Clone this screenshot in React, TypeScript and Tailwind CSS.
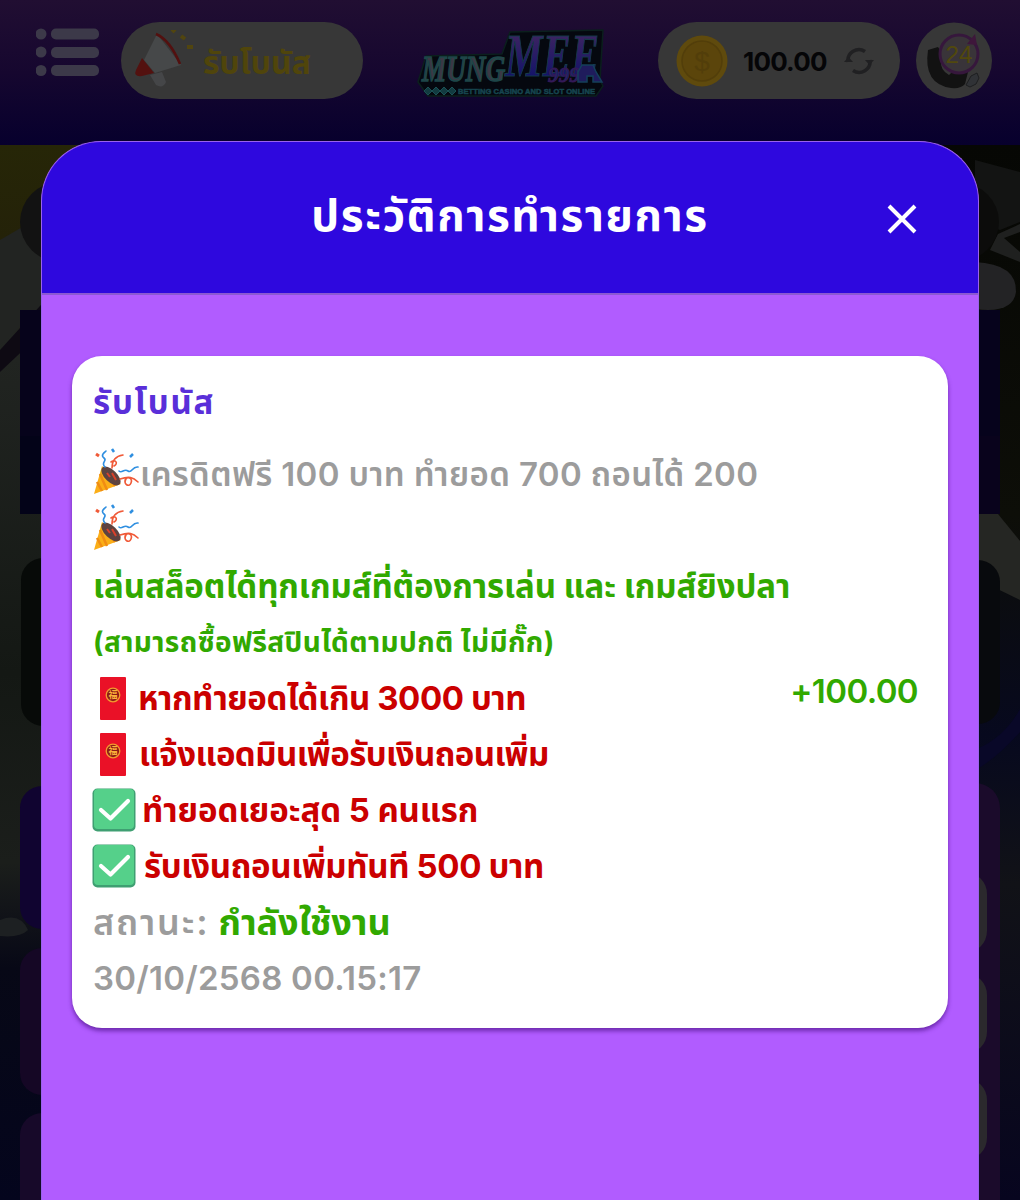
import React from 'react';

const font = "font-['Inter','Noto_Sans_Thai','Noto_Sans','Open_Sans',sans-serif]";

function PartyPopper() {
  return (
    <svg viewBox="0 0 48 48" className="-mt-1 h-12 w-12 shrink-0" fill="none">
      <path d="M9 18 L1 46 L28 36 Z" fill="#fbae17" />
      <path d="M7 26 L14 42 M4 34 L9 43 M12 21 L22 38" stroke="#f08c13" strokeWidth="2.500" />
      <ellipse cx="18" cy="28" rx="6" ry="12" transform="rotate(-46 18 28)" fill="#5d4340" />
      <path d="M14 25 l3 4 M19 25 l4 7" stroke="#d9412b" strokeWidth="2" />
      <path d="M12 19 c-5 -5 3 -6 -1 -9 s1 -6 2 -7 M26 23 c3 3 5 -3 9 0 s4 -5 10 -4" stroke="#2f8fe0" strokeWidth="1.600" strokeLinecap="round" />
      <path d="M19 20 c0 -8 4 -12 11 -13 M18 14 c4 -3 8 1 3 4 M27 31 c9 -3 13 -2 18 3 M33 31 c-3 5 3 9 5 4 s-4 -7 -6 -3" stroke="#f05a38" strokeWidth="1.600" strokeLinecap="round" />
      <path d="M19 1 l2 3 M37 9 l3 -3" stroke="#2f8fe0" strokeWidth="2.500" />
      <path d="M3 6 l3 2" stroke="#f05a38" strokeWidth="3" />
    </svg>
  );
}

function RedEnvelope() {
  return (
    <svg viewBox="0 0 26 43" className="h-[43px] w-[26px] shrink-0">
      <rect width="26" height="43" rx="1" fill="#ea1127" />
      <circle cx="13" cy="18" r="6.8" fill="#8e1b16" stroke="#f29a2e" strokeWidth="1.3" />
      <text x="13" y="21.4" textAnchor="middle" fontSize="9" fontWeight="700" fill="#fbb03b" fontFamily="Noto Sans CJK TC, sans-serif">福</text>
    </svg>
  );
}

function CheckBadge() {
  return (
    <svg viewBox="0 0 44 44" className="-ml-px h-11 w-11 shrink-0" fill="none">
      <rect x="0.5" y="0.5" width="43" height="43" rx="5" fill="#3f9f72" />
      <rect x="2" y="1" width="40" height="40" rx="4" fill="#55d08a" />
      <path d="M9 22 L18.5 30.5 L36 13" stroke="#fff" strokeWidth="4.2" strokeLinecap="round" strokeLinejoin="round" />
    </svg>
  );
}

function Logo() {
  return (
    <svg viewBox="0 0 200 80" className="h-20 w-[200px] overflow-visible" fontWeight="700" fontStyle="italic">
      <path d="M16 34 L92 32 L100 10 L193 8 L190 58 L193 64 L186 74 L18 74 L8 60 Z" fill="#05080f" stroke="#0b1f1d" strokeWidth="1.500" strokeLinejoin="round" />
      <defs>
        <linearGradient id="mee" x1="0" y1="0" x2="0" y2="1">
          <stop offset="0.150" stopColor="#3f2560" />
          <stop offset="0.800" stopColor="#151469" />
        </linearGradient>
      </defs>
      <g fontFamily="Liberation Serif, serif">
        <text x="95" y="54" fontSize="62" textLength="94" lengthAdjust="spacingAndGlyphs" fill="url(#mee)" stroke="#163a4a" strokeWidth="1.200">MEE</text>
        <text x="12" y="59" fontSize="36" textLength="83" lengthAdjust="spacingAndGlyphs" fill="#3b3844" stroke="#1d4648" strokeWidth="1.600">MUNG</text>
        <text x="138" y="60" fontSize="21" textLength="32" lengthAdjust="spacingAndGlyphs" fill="#182764" stroke="#351856" strokeWidth="1">999</text>
      </g>
      <path d="M168 60 v-10 l4 -7 h11 l3 7 l6 10 h-9 v-6 h-6 v6 Z" fill="#1f1c5c" stroke="#143f5a" strokeWidth="1.500" />
      <g fill="#123b40" stroke="#1a5054">
        <path d="M18 65 l4 4 -4 4 -4 -4 Z M26 65 l4 4 -4 4 -4 -4 Z M34 65 l4 4 -4 4 -4 -4 Z M42 65 l4 4 -4 4 -4 -4 Z" />
      </g>
      <text x="48" y="72" fontSize="8" fontStyle="normal" fontFamily="Liberation Sans, sans-serif" textLength="137" lengthAdjust="spacingAndGlyphs" fill="#16454f" stroke="#16454f" strokeWidth="0.5">BETTING CASINO AND SLOT ONLINE</text>
    </svg>
  );
}

function Header() {
  return (
    <header className="flex h-[145px] items-start bg-linear-to-b from-[#210e32] via-[#16072f] to-[#07002d] pt-[22px] pl-9">
      <svg viewBox="0 0 66 60" className="h-[60px] w-[66px]" fill="#3c3949">
        <circle cx="5" cy="12" r="5.500" />
        <circle cx="5" cy="30" r="5.500" />
        <circle cx="5" cy="48.500" r="5.500" />
        <rect x="15" y="6.500" width="48" height="11" rx="5" />
        <rect x="15" y="25" width="48" height="11" rx="5" />
        <rect x="15" y="43" width="48" height="11" rx="5" />
      </svg>
      <div className="ml-[19px] flex h-[77px] w-[242px] items-center rounded-full bg-[#373737] pl-3">
        <svg viewBox="0 0 62 62" className="h-[62px] w-[62px]" fill="none">
          <path d="M24 4 L48 35 L22 43 L11 30 Z" fill="#464849" />
          <path d="M9 28 L21 43 L9 46 Q0 47 3 40 Z" fill="#53110f" />
          <path d="M17 45 l12 -3 l4 10 q-3 7 -10 3 Z" fill="#454648" />
          <path d="M23 4 Q37 10 47 34" stroke="#53100f" strokeWidth="2.500" />
          <path d="M39 -1 l3 3 M48 6 l4 3 M54 17 l6 0" stroke="#51450f" strokeWidth="4" />
        </svg>
        <span className="mt-1 ml-2 text-[32px] font-bold text-[#50450b]">รับโบนัส</span>
      </div>
      <div className="ml-[47px]">
        <Logo />
      </div>
      <div className="ml-12 flex h-[77px] w-[242px] items-center rounded-full bg-[#373737] pl-[18px]">
        <svg viewBox="0 0 52 52" className="h-[52px] w-[52px]">
          <circle cx="26" cy="26" r="25.500" fill="#5f4a0d" />
          <circle cx="26" cy="26" r="20" fill="#5b450b" stroke="#523e0a" strokeWidth="1.500" />
          <text x="26" y="36" textAnchor="middle" fontSize="28" fill="#523e0a" fontFamily="Liberation Sans, sans-serif">$</text>
        </svg>
        <span className="mt-0.5 ml-[15px] w-[86px] text-[26px] font-bold tracking-[-0.8px] text-[#050507]">100.00</span>
        <svg viewBox="0 0 30 28" className="ml-[15px] h-7 w-[30px]" fill="none" stroke="#202022" strokeWidth="3.500">
          <path d="M4 15 A11 11 0 0 1 21 4.500 M26 13 A11 11 0 0 1 9 23.500" />
          <path d="M0 15 h9 l-4.500 -5 Z M21 13 h9 l-4.500 5 Z" fill="#202022" stroke="none" />
        </svg>
      </div>
      <svg viewBox="0 0 76 77" className="ml-4 h-[77px] w-[76px]" fill="none">
        <circle cx="38" cy="38.500" r="38" fill="#373737" />
        <path d="M12 28 q-5 34 23 38 q10 1 14 -4 l3 -12 -16 0 -3 3 q-9 -5 -8 -14 l3 -5 -6 -9 Z" fill="#121212" />
        <circle cx="43" cy="32" r="19" fill="#393439" stroke="#36173c" strokeWidth="3" />
        <path d="M51 22 l8 -10 2 11 Z" fill="#3e173b" />
        <text x="43" y="41" textAnchor="middle" fontSize="24" fill="#51480d" fontFamily="Liberation Sans, sans-serif" textLength="27" lengthAdjust="spacingAndGlyphs">24</text>
        <path d="M50 63 l5 -9 6 -3 2 5 -3 6 -6 3 Z" fill="#303236" stroke="#1d1e20" />
      </svg>
    </header>
  );
}

// Dimmed page that shows on both sides of the dialog
function Backdrop() {
  return (
    <svg viewBox="0 145 1020 1055" className="h-[1055px] w-[1020px]">
      <defs>
        <linearGradient id="left" x1="0" y1="0" x2="0" y2="1">
          <stop offset="0" stopColor="#262607" />
          <stop offset="0.130" stopColor="#232009" />
          <stop offset="0.180" stopColor="#222522" />
          <stop offset="0.500" stopColor="#141814" />
          <stop offset="0.680" stopColor="#1b1e1b" />
          <stop offset="0.780" stopColor="#070816" />
          <stop offset="1" stopColor="#04051d" />
        </linearGradient>
        <linearGradient id="right" x1="0" y1="0" x2="0" y2="1">
          <stop offset="0" stopColor="#060704" />
          <stop offset="0.350" stopColor="#0d0e08" />
          <stop offset="0.560" stopColor="#07091e" />
          <stop offset="0.700" stopColor="#111217" />
          <stop offset="1" stopColor="#07051f" />
        </linearGradient>
      </defs>
      <rect y="145" width="510" height="1055" fill="url(#left)" />
      <rect x="510" y="145" width="510" height="1055" fill="url(#right)" />
      <path d="M0 240 L60 205 V290 L0 345 Z" fill="#222422" />
      <path d="M0 350 L50 295 V325 L0 372 Z" fill="#0e0a13" />
      <circle cx="60" cy="222" r="40" fill="#121212" />
      <rect x="20" y="310" width="40" height="204" fill="#06031b" />
      <rect x="20" y="436" width="40" height="78" fill="#030318" />
      <rect x="21" y="558" width="60" height="168" rx="22" fill="#070a08" />
      <path d="M0 920 Q20 912 28 930 Q20 938 0 936 Z" fill="#1d2022" />
      <rect x="20" y="786" width="60" height="143" rx="22" fill="#100430" />
      <rect x="20" y="948" width="60" height="147" rx="22" fill="#150725" />
      <rect x="20" y="1113" width="60" height="147" rx="22" fill="#170929" />

      <path d="M975 160 L1020 172 V222 L1000 230 L975 220 Z" fill="#131413" />
      <path d="M998 234 L1020 224 V232 L1004 238 L1020 252 V262 L990 250 Z" fill="#1f201f" />
      <path d="M975 262 q42 2 41 30 q-3 22 -41 17 Z" fill="#232325" />
      <circle cx="960" cy="222" r="39" fill="#0c0c0b" />
      <rect x="940" y="310" width="60" height="204" fill="#06031c" />
      <rect x="940" y="436" width="60" height="78" fill="#09031c" />
      <path d="M979 514 H998 L1020 541 V600 L979 580 Z" fill="#252623" />
      <rect x="940" y="560" width="60" height="164" rx="22" fill="#080a0d" />
      <path d="M979 748 Q1005 736 1020 709 V732 Q1000 755 979 768 Z" fill="#090828" />
      <rect x="920" y="783" width="80" height="460" rx="25" fill="#1b0b2b" />
      <rect x="930" y="872" width="57" height="81" rx="22" fill="#2b292d" />
      <rect x="930" y="973" width="57" height="81" rx="22" fill="#2b292d" />
      <rect x="930" y="1078" width="57" height="82" rx="22" fill="#2b292d" />
    </svg>
  );
}

export default function App() {
  return (
    <div className={`relative h-[1200px] w-[1020px] overflow-hidden bg-black ${font}`}>
      <Header />
      <Backdrop />

      {/* History dialog */}
      <div className="absolute inset-x-[41px] top-[141px] bottom-0 overflow-hidden rounded-t-[60px] border-x border-t border-[#9a62ed] bg-[#b15cff]">
        <div className="relative flex h-[153px] items-center justify-center border-b-2 border-[#8b59d2] bg-[#2e08de]">
          <h1 className="-mt-1.5 text-[44px] font-bold tracking-[1.6px] whitespace-nowrap text-white">ประวัติการทำรายการ</h1>
          <button className="absolute top-[62px] right-[61px]" aria-label="ปิด">
            <svg viewBox="0 0 30 30" className="h-[30px] w-[30px]" stroke="#fff" strokeWidth="4">
              <path d="M2 2 L28 28 M28 2 L2 28" />
            </svg>
          </button>
        </div>

        <div className="mx-[30px] mt-[61px] flex h-[672px] items-center justify-between rounded-[30px] bg-white pr-[39px] pl-[21px] shadow-[0_3px_4px_rgba(80,20,140,0.7)]">
          <div className="flex h-full flex-col pt-[18px] text-[33px] leading-none font-bold whitespace-nowrap text-[#cb0000]">
            <h2 className="flex h-14 items-center tracking-[1.8px] text-[#5a2fd9]">รับโบนัส</h2>
            <div className="mt-4 flex h-14 items-center text-[#9c9c9c]">
              <PartyPopper />
              <span className="-ml-px font-semibold tracking-[0.37px]">เครดิตฟรี 100 บาท ทำยอด 700 ถอนได้ 200</span>
            </div>
            <div className="flex h-14 items-center">
              <PartyPopper />
            </div>
            <div className="flex h-14 items-center tracking-[-0.1px] text-[#31a900]">เล่นสล็อตได้ทุกเกมส์ที่ต้องการเล่น และ เกมส์ยิงปลา</div>
            <div className="flex h-14 items-center text-[28px] tracking-[0.4px] text-[#31a900]">(สามารถซื้อฟรีสปินได้ตามปกติ ไม่มีกั๊ก)</div>
            <div className="flex h-14 items-center pl-[7px]">
              <RedEnvelope />
              <span className="ml-3 tracking-[-0.45px]">หากทำยอดได้เกิน 3000 บาท</span>
            </div>
            <div className="flex h-14 items-center pl-[7px]">
              <RedEnvelope />
              <span className="ml-[13px] tracking-[-0.6px]">แจ้งแอดมินเพื่อรับเงินถอนเพิ่ม</span>
            </div>
            <div className="flex h-14 items-center">
              <CheckBadge />
              <span className="ml-1.5 tracking-[-0.1px]">ทำยอดเยอะสุด 5 คนแรก</span>
            </div>
            <div className="flex h-14 items-center">
              <CheckBadge />
              <span className="ml-2 tracking-[-0.35px]">รับเงินถอนเพิ่มทันที 500 บาท</span>
            </div>
            <div className="flex h-14 items-center text-[36px] text-[#9c9c9c]">
              <span className="font-semibold tracking-[1.8px]">สถานะ:</span>
              <span className="ml-[9px] text-[#31a900]">กำลังใช้งาน</span>
            </div>
            <div className="flex h-14 items-center font-semibold tracking-[0.25px] text-[#9c9c9c]">30/10/2568 00.15:17</div>
          </div>
          <span className="text-[33px] font-semibold tracking-[-0.6px] text-[#31a900]">+100.00</span>
        </div>
      </div>
    </div>
  );
}
